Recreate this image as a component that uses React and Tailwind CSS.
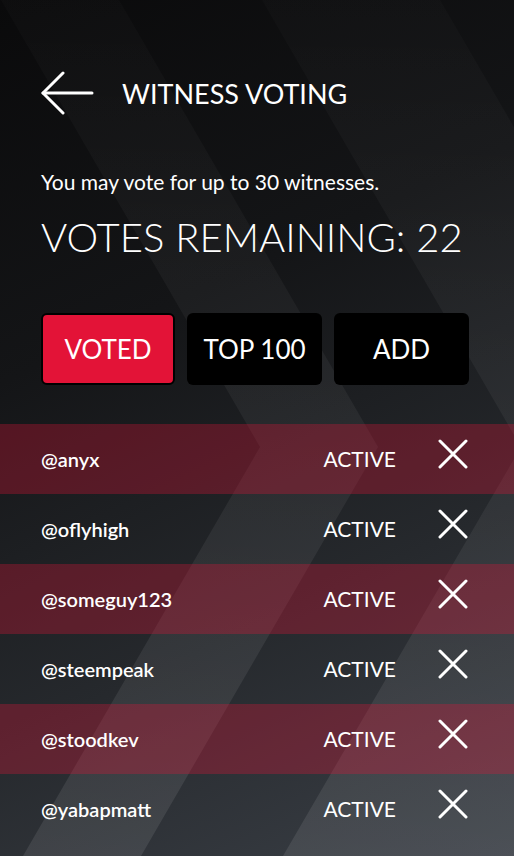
import React from 'react';

const witnesses = ['anyx', 'oflyhigh', 'someguy123', 'steempeak', 'stoodkev', 'yabapmatt'];

const Backdrop = () => (
  <svg className="absolute inset-0 h-full w-full" viewBox="0 0 514 856" preserveAspectRatio="none">
    <defs>
      <linearGradient id="band" x1="0" y1="0" x2="0" y2="1">
        <stop offset="0" stopColor="#ffffff" stopOpacity="0.015" />
        <stop offset="0.5" stopColor="#ffffff" stopOpacity="0.05" />
        <stop offset="1" stopColor="#ffffff" stopOpacity="0.09" />
      </linearGradient>
    </defs>
    <polygon points="1,0 260,447 23,856 141,856 378,447 119,0" fill="url(#band)" />
    <polygon points="262,0 521,447 283,856 600,856 700,447 440,0" fill="url(#band)" />
  </svg>
);

const BackArrow = () => (
  <svg width="54" height="44" viewBox="0 0 54 44" fill="none" stroke="#fff" strokeWidth="3" strokeLinecap="round" strokeLinejoin="round">
    <path d="M3 22 H52" />
    <path d="M23 2 L3 22 L23 42" />
  </svg>
);

const CloseIcon = () => (
  <svg width="30" height="30" viewBox="0 0 30 30" fill="none" stroke="#fff" strokeWidth="3" strokeLinecap="round">
    <path d="M2 2 L28 28 M28 2 L2 28" />
  </svg>
);

const Tab = ({ label, active }) => (
  <button
    className={
      active
        ? 'h-[72px] w-[134px] rounded-md border-2 border-black bg-[#e31337] text-[26px] text-white'
        : 'h-[72px] w-[135px] rounded-md bg-black text-[26px] text-white'
    }
  >
    {label}
  </button>
);

export default function App() {
  return (
    <div
      className="relative h-[856px] w-full overflow-hidden bg-[linear-gradient(155deg,#0a0a0b_0%,#141517_35%,#26292d_68%,#3a3f46_100%)] text-white"
      style={{ fontFamily: 'Lato, "Noto Sans", sans-serif' }}
    >
      <Backdrop />
      <div className="relative">
        <div className="flex items-center pl-[40px] pt-[71px]">
          <BackArrow />
          <h1 className="ml-[28px] text-[27px] font-normal leading-none">WITNESS VOTING</h1>
        </div>

        <div className="px-[41px] pt-[55px]">
          <p className="whitespace-nowrap text-[21px] leading-[24px]">You may vote for up to 30 witnesses.</p>
          <h2 className="mt-[20px] whitespace-nowrap text-[40px] font-light leading-[46px]">VOTES REMAINING: 22</h2>
        </div>

        <div className="flex gap-[12px] pl-[41px] pt-[53px]">
          <Tab label="VOTED" active />
          <Tab label="TOP 100" />
          <Tab label="ADD" />
        </div>

        <div className="mt-[39px]">
          {witnesses.map((name, i) => (
            <div
              key={name}
              className={
                i % 2 === 0
                  ? 'flex h-[70px] items-center bg-[#e31337]/30 pl-[41px] pr-[46px]'
                  : 'flex h-[70px] items-center pl-[41px] pr-[46px]'
              }
            >
              <span className="flex-1 text-[20px] font-semibold">@{name}</span>
              <span className="text-[21px]">ACTIVE</span>
              <span className="ml-[42px] -mt-[11px] flex">
                <CloseIcon />
              </span>
            </div>
          ))}
        </div>
      </div>
    </div>
  );
}
